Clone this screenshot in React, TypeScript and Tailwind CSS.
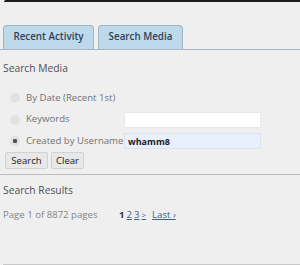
import React, { useState } from 'react';

const font = { fontFamily: '"Open Sans", "Liberation Sans", sans-serif' };

export default function App() {
  const [mode, setMode] = useState('user');
  const [keywords, setKeywords] = useState('');
  const [username, setUsername] = useState('whamm8');

  const radio =
    'appearance-none w-[10px] h-[10px] rounded-full bg-[#e2e2e2] mr-[6px] shrink-0 checked:bg-[radial-gradient(circle,#555_0,#555_2px,#e2e2e2_2.5px)]';

  return (
    <div className="w-[300px] h-[265px] bg-[#efefef] overflow-hidden relative text-[9.6px]" style={font}>
      <div className="h-[2px] ml-[4px] bg-[#1c1c1c] rounded-tl-[3px]" />

      {/* tabs */}
      <div className="flex items-end gap-[4px] pl-[3px] pt-[23px] border-b border-[#a7b6c2]">
        <button className="w-[91px] h-[24px] bg-[#bfd9ec] border border-b-0 border-[#9fb4c4] rounded-t-[4px] text-[#2f4254] font-semibold text-[9.8px]">
          Recent Activity
        </button>
        <button className="w-[85px] h-[24px] bg-[#bfd9ec] border border-b-0 border-[#9fb4c4] rounded-t-[4px] text-[#2f4254] font-semibold text-[9.8px]">
          Search Media
        </button>
      </div>

      <div className="pl-[3px] pt-[11px] text-[#505050] font-medium text-[10.3px] leading-[14px]">Search Media</div>

      <div className="mt-[15px] flex flex-col gap-[5.5px]">
        <label className="flex items-center h-[16px] pl-[10px] text-[#737373]">
          <input type="radio" name="mode" checked={mode === 'date'} onChange={() => setMode('date')} className={radio} />
          By Date (Recent 1st)
        </label>
        <label className="flex items-center h-[16px] pl-[10px] text-[#737373]">
          <input type="radio" name="mode" checked={mode === 'kw'} onChange={() => setMode('kw')} className={radio} />
          <span className="w-[98px]">Keywords</span>
          <input
            value={keywords}
            onChange={(e) => setKeywords(e.target.value)}
            className="w-[137px] h-[16px] bg-white border border-[#e8e8e8] outline-none"
          />
        </label>
        <label className="flex items-center h-[16px] pl-[10px] text-[#737373]">
          <input type="radio" name="mode" checked={mode === 'user'} onChange={() => setMode('user')} className={radio} />
          <span className="w-[98px] whitespace-nowrap">Created by Username</span>
          <input
            value={username}
            onChange={(e) => setUsername(e.target.value)}
            className="w-[137px] h-[16px] bg-[#e8f0fe] border border-[#dde3ea] outline-none px-[3px] text-[9px] text-[#1a1a1a] font-bold"
          />
        </label>
      </div>

      <div className="flex gap-[3px] pl-[5px] mt-[3px]">
        <button className="w-[43px] h-[17px] bg-[#e8e8e8] border border-[#d2d2d2] rounded-[2px] text-[#222] text-[9.6px] leading-none">
          Search
        </button>
        <button className="w-[33px] h-[17px] bg-[#e8e8e8] border border-[#d2d2d2] rounded-[2px] text-[#222] text-[9.6px] leading-none">
          Clear
        </button>
      </div>

      <div className="mt-[5px] border-t border-[#bdbdbd]" />

      <div className="pl-[3px] pt-[8px] text-[#505050] font-medium text-[10.3px] leading-[14px]">Search Results</div>

      <div className="flex items-center pl-[3px] mt-[11px] text-[#858585] leading-[14px]">
        <span className="w-[116px]">Page 1 of 8872 pages</span>
        <span className="flex items-center gap-[2px] text-[#40637e]">
          <span className="font-bold text-[#333]">1</span>
          <a className="underline">2</a>
          <a className="underline">3</a>
          <a className="underline text-[8px]">&gt;</a>
          <a className="underline ml-[4px]">Last ›</a>
        </span>
      </div>

      <div className="absolute left-[3px] right-0 bottom-0 h-px bg-[#c8c8c8]" />
    </div>
  );
}
